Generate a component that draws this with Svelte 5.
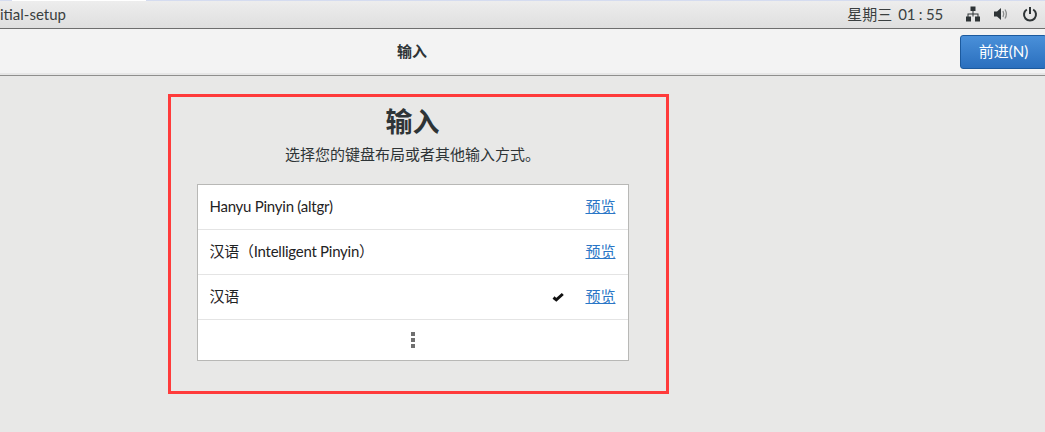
<script>
  const rows = [
    { name: 'Hanyu Pinyin (altgr)', checked: false },
    { name: '汉语（Intelligent Pinyin）', checked: false },
    { name: '汉语', checked: true }
  ];
</script>

<div class="page">
  <div class="strip"><span class="tab"></span></div>
  <div class="topbar">
    <span class="app">itial-setup</span>
    <div class="status">
      <span class="day">星期三</span>
      <span class="clock">01 : 55</span>
      <svg class="net" width="16" height="16" viewBox="0 0 16 16"><path fill="#2e3436" d="M5.500 0.500h5v4.500h-5zM7.500 5h1V7.500h5V10.500h-1V8.500H8.500V10.500h-1V8.500h-4V10.500h-1V7.500h5zM1 10.500h5V15.500H1zM10 10.500h5V15.500h-5z"/></svg>
      <svg class="vol" width="16" height="16" viewBox="0 0 16 16"><path fill="#2e3436" d="M1 5.500h3L8 2v12l-4-3.500H1z"/><path fill="none" stroke="#8a8c8c" stroke-width="1.300" d="M10 5c1 2 1 4 0 6M12 3.500c1.800 3 1.800 6 0 9"/></svg>
      <svg class="pow" width="16" height="16" viewBox="0 0 16 16"><path fill="none" stroke="#2e3436" stroke-width="2" d="M4.800 3.500a6 6 0 1 0 6.400 0"/><path fill="none" stroke="#2e3436" stroke-width="2" d="M8 1v7"/></svg>
    </div>
  </div>
  <header class="head">
    <h2>输入</h2>
    <button class="next">前进(N)</button>
  </header>
  <main class="body">
    <section class="frame">
      <h1>输入</h1>
      <p>选择您的键盘布局或者其他输入方式。</p>
      <div class="list">
        {#each rows as r}
          <div class="row">
            <span class="name">{r.name}</span>
            {#if r.checked}
              <svg class="check" width="12" height="10" viewBox="0 0 12 10"><path fill="none" stroke="#111" stroke-width="3" d="M1.500 5.500l2.800 2.300L10.800 2"/></svg>
            {/if}
            <a href="#preview">预览</a>
          </div>
        {/each}
        <div class="more"><span class="dots"><i></i><i></i><i></i></span></div>
      </div>
    </section>
  </main>
</div>

<style>
  :global(body) { margin: 0; }
  .page {
    width: 1045px; height: 432px; overflow: hidden;
    display: flex; flex-direction: column;
    background: #e8e8e7;
    font-family: Lato, "Noto Sans CJK SC", sans-serif;
    font-size: 15px;
    color: #2e3436;
  }
  .strip { height: 1px; background: #d5dcf0; padding-left: 12px; flex: none; }
  .tab { display: block; width: 134px; height: 1px; background: #fff; }
  .topbar {
    height: 27px; flex: none; box-sizing: border-box;
    padding-bottom: 2px;
    display: flex; align-items: center; justify-content: space-between;
    background: linear-gradient(#ededed, #dfdfdf);
    color: #3a3f40;
  }
  .status { display: flex; align-items: center; gap: 0; }
  .day { margin-right: 6px; }
  .clock { margin-right: 22px; letter-spacing: -0.2px; }
  .net { margin-right: 12px; }
  .vol { margin-right: 13px; }
  .pow { margin-right: 7px; }
  .head {
    height: 48px; flex: none; box-sizing: border-box;
    display: flex; align-items: center;
    background: #f3f3f3;
    border-top: 1px solid #6e6e6e;
    border-bottom: 1px solid #8f8f8d;
    box-shadow: inset 0 -2px 0 #e6e6e6;
    position: relative;
  }
  h2 {
    margin: 0 0 3px 397px; font-size: 15px; font-weight: 700; line-height: 20px;
    color: #2e3436;
  }
  .next {
    position: absolute; right: -2px; top: 6px;
    width: 87px; height: 34px; padding: 0 0 3px;
    border: 1px solid #1c5a9e; border-radius: 3px;
    background: linear-gradient(#4a90d9, #2a6fbe);
    color: #fff; font: inherit;
  }
  .body { flex: 1; padding: 18px 0 0 168px; }
  .frame {
    width: 501px; height: 300px; box-sizing: border-box;
    border: 3px solid #ff3b3b;
    padding-right: 12px;
    display: flex; flex-direction: column; align-items: center;
  }
  h1 {
    margin: 8px 0 0; font-size: 27px; line-height: 34px; font-weight: 700;
    color: #2e3436;
  }
  p { margin: 5px 0 0; line-height: 20px; color: #2e3436; }
  .list {
    margin-top: 20px; width: 432px; box-sizing: border-box;
    background: #fff; border: 1px solid #b8b8b6;
    display: flex; flex-direction: column;
  }
  .row {
    height: 45px; box-sizing: border-box;
    display: flex; align-items: center;
    padding: 0 12px 3px 12px;
    border-bottom: 1px solid #e4e4e4;
    color: #1f2324;
  }
  .name { flex: 1; letter-spacing: -0.25px; }
  .check { margin: 3px 21px 0 0; }
  a { color: #2a76c6; text-decoration: underline; }
  .more { height: 40px; display: flex; align-items: center; justify-content: center; }
  .dots { display: flex; flex-direction: column; gap: 2px; }
  .dots i { display: block; width: 4px; height: 4px; background: #6f6f6f; }
</style>
